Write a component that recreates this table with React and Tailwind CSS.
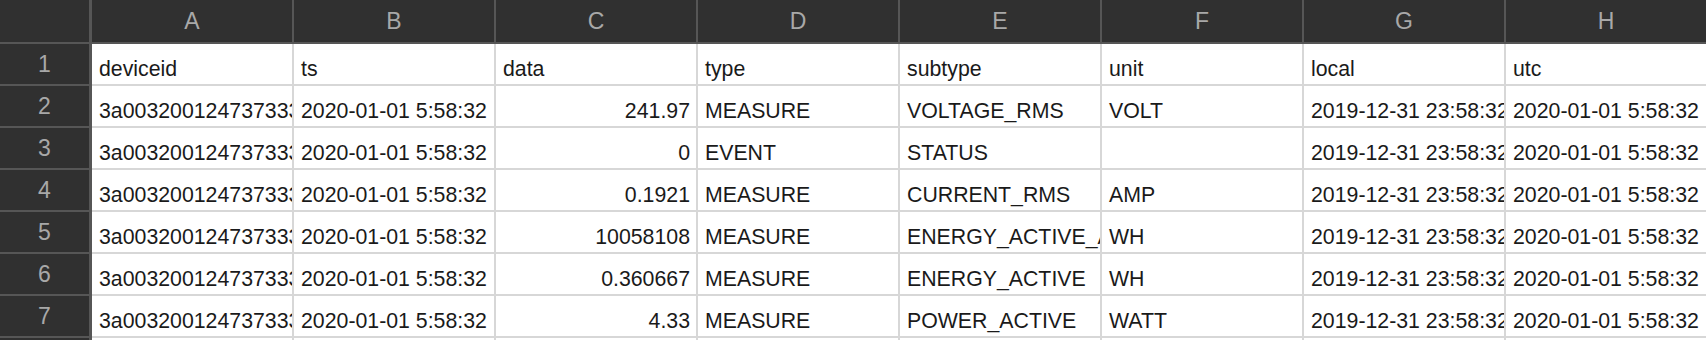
import React from "react";

const cols = ["A", "B", "C", "D", "E", "F", "G", "H"];
const id = "3a0032001247373335303837";
const rows = [
  [["deviceid"], ["ts"], ["data"], ["type"], ["subtype"], ["unit"], ["local"], ["utc"]],
  [[id], ["2020-01-01 5:58:32"], ["241.97", 1], ["MEASURE"], ["VOLTAGE_RMS"], ["VOLT"], ["2019-12-31 23:58:32"], ["2020-01-01 5:58:32"]],
  [[id], ["2020-01-01 5:58:32"], ["0", 1], ["EVENT"], ["STATUS"], [""], ["2019-12-31 23:58:32"], ["2020-01-01 5:58:32"]],
  [[id], ["2020-01-01 5:58:32"], ["0.1921", 1], ["MEASURE"], ["CURRENT_RMS"], ["AMP"], ["2019-12-31 23:58:32"], ["2020-01-01 5:58:32"]],
  [[id], ["2020-01-01 5:58:32"], ["10058108", 1], ["MEASURE"], ["ENERGY_ACTIVE_ABS"], ["WH"], ["2019-12-31 23:58:32"], ["2020-01-01 5:58:32"]],
  [[id], ["2020-01-01 5:58:32"], ["0.360667", 1], ["MEASURE"], ["ENERGY_ACTIVE"], ["WH"], ["2019-12-31 23:58:32"], ["2020-01-01 5:58:32"]],
  [[id], ["2020-01-01 5:58:32"], ["4.33", 1], ["MEASURE"], ["POWER_ACTIVE"], ["WATT"], ["2019-12-31 23:58:32"], ["2020-01-01 5:58:32"]],
  [[""], [""], [""], [""], [""], [""], [""], [""]],
];

export default function App() {
  return (
    <div
      className="w-[1706px] h-[340px] overflow-hidden bg-white"
      style={{ fontFamily: '"Liberation Sans", Arial, sans-serif' }}
    >
      <div className="grid grid-cols-[92px_repeat(8,202px)] w-max">
        <div className="h-[44px] bg-[#303030] border-r-[3px] border-b-2 border-[#565656]" />
        {cols.map((c) => (
          <div
            key={c}
            className="h-[44px] bg-[#303030] border-r-2 border-b-2 border-[#565656] flex items-center justify-center text-[23px] text-[#a8a8a8]"
          >
            {c}
          </div>
        ))}
        {rows.map((r, i) => (
          <React.Fragment key={i}>
            <div className="h-[42px] bg-[#303030] border-r-[3px] border-b-2 border-[#565656] flex items-center justify-center text-[23px] text-[#a8a8a8]">
              {i + 1}
            </div>
            {r.map(([t, right], j) => (
              <div
                key={j}
                className={
                  "h-[42px] bg-white border-r-2 border-b-2 border-[#d7d7d7] flex items-end overflow-hidden whitespace-nowrap text-[21.3px] leading-[24px] text-[#1a1a1a] pb-[3px] " +
                  (right ? "justify-end pr-[6px]" : "justify-start pl-[7px]")
                }
              >
                <span className="block">{t}</span>
              </div>
            ))}
          </React.Fragment>
        ))}
      </div>
    </div>
  );
}
